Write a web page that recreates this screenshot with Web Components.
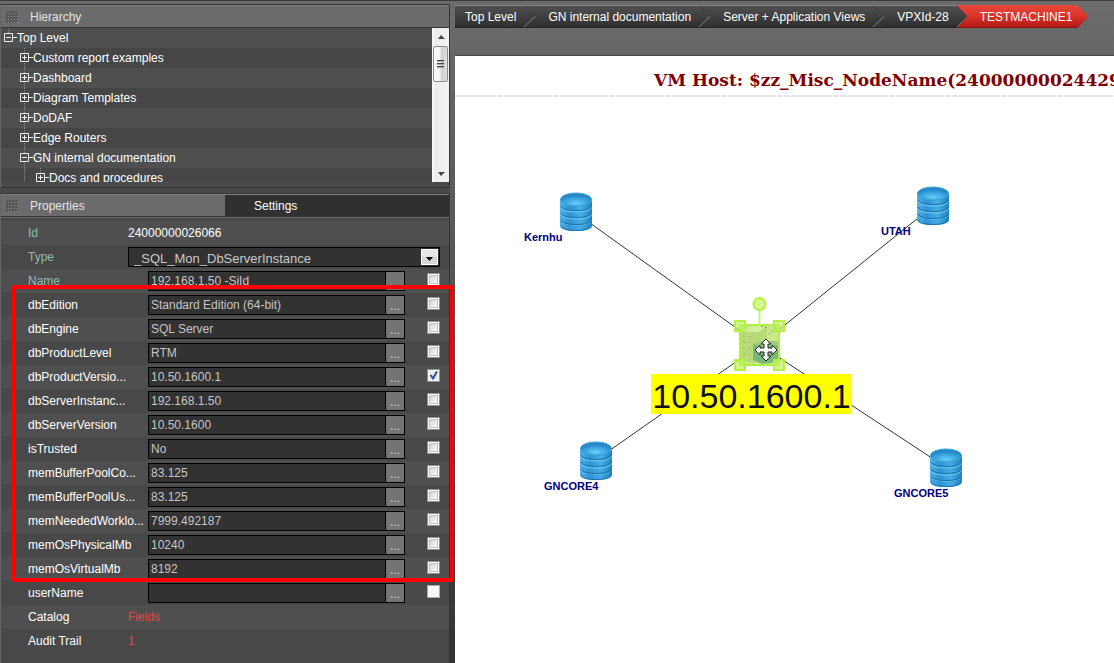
<!DOCTYPE html>
<html lang="en">
<head>
<meta charset="utf-8">
<title>TESTMACHINE1</title>
<style>
body { margin: 0; font-family: "Liberation Sans", Arial, sans-serif; font-size: 12px; color: #fff; background: #4a4a4a; }
</style>
</head>
<body>
<app-shell></app-shell>
<script>
const define = (name, html, setup) => customElements.define(name, class extends HTMLElement {
  connectedCallback() {
    if (this.shadowRoot) return;
    const root = this.attachShadow({ mode: 'open' });
    root.innerHTML = typeof html === 'function' ? html(this) : html;
    if (setup) setup(this, root);
  }
});

define('drag-grip', `<style>:host{display:block;width:12px;height:12px;flex:none}</style>
<svg width="12" height="12"><defs><pattern id="g" width="3" height="3" patternUnits="userSpaceOnUse"><path d="M0 2h1v-1h1v-1" stroke="#444" fill="none"/><path d="M2 2h1v1h-1z" fill="#848484"/></pattern></defs><rect width="12" height="12" fill="url(#g)"/></svg>`);

define('crumb-item', el => `<style>
:host{display:flex;height:23px;flex:none}
a{display:block;color:#fff;text-decoration:none;line-height:22px;white-space:nowrap;padding:0 8px 0 12px;background:linear-gradient(#505050,#2f2f2f);border-top:1px solid #858585;border-bottom:1px solid #222;box-sizing:border-box;height:23px}
:host([first]) a{padding-left:10px}
:host([current]) a{margin-left:-12px;padding:0 16px 0 23px;border:0;background:linear-gradient(#e8483d,#d93228 50%,#b31b13 94%,#8b100a 95%);line-height:24px;clip-path:polygon(0 0,calc(100% - 11px) 0,100% 50%,calc(100% - 11px) 100%,0 100%,11px 50%)}
svg{display:block}
</style><a href="#"><slot></slot></a>${el.hasAttribute('current') ? '' : `<svg width="12" height="23"><defs><linearGradient id="b" x2="0" y2="1"><stop stop-color="#505050"/><stop offset="1" stop-color="#2f2f2f"/></linearGradient></defs><rect width="12" height="23" fill="url(#b)"/><path d="M0 .5h12" stroke="#858585"/><path d="M0 22.500h12" stroke="#222"/><path d="M0 1l11 10.500" stroke="#3c3c3c"/><path d="M0 22l11-10.500" stroke="#868686"/></svg>`}`);

define('crumb-bar', `<style>:host{display:block}nav{display:flex;overflow:hidden}</style>
<nav aria-label="Breadcrumb"><crumb-item first>Top Level</crumb-item><crumb-item>GN internal documentation</crumb-item><crumb-item>Server + Application Views</crumb-item><crumb-item>VPXId-28</crumb-item><crumb-item current>TESTMACHINE1</crumb-item></nav>`);

define('tree-item', el => {
  const level = +el.getAttribute('level'), open = el.hasAttribute('open');
  return `<style>
:host{display:flex;height:20px;flex:none;padding-left:${3 + level * 16}px;line-height:20px;white-space:nowrap}
button{border:0;background:none;padding:0;width:13px;height:20px;flex:none}
svg{display:block}.stem{width:16px;margin-left:-16px;flex:none}
</style>${level === 2 ? '<svg class="stem" width="16" height="20"><path d="M4.500 0v20" stroke="#8c8c8c" stroke-dasharray="1 1"/></svg>' : ''}<button aria-label="${open ? 'Collapse' : 'Expand'}"><svg width="13" height="20"><path d="M4.500 0v5${level === 1 ? 'M4.500 15v5' : ''}" stroke="#8c8c8c" stroke-dasharray="1 1"/><path d="M.5 5.500h8v8h-8zM2 9.500h5${open ? '' : 'M4.500 7v5'}M9 9.500h4" fill="none" stroke="#eee"/></svg></button><slot></slot>`;
});

define('tree-scrollbar', `<style>
:host{display:flex;flex-direction:column;width:17px;flex:none;background:linear-gradient(90deg,#fafafa,#ececec 20%,#f2f2f2)}
.thumb{height:36px;box-sizing:border-box;border:1px solid #8d8d8d;border-radius:2px;margin:0 1px;background:linear-gradient(90deg,#f8f8f8 40%,#cfcfd3 60%,#dedee2)}
svg{display:block}.down{margin-top:auto}
</style>
<svg width="17" height="18"><path d="M6 11l3-4 4 4z" fill="#444"/></svg><div class="thumb"><svg width="13" height="34"><path d="M3 13.500h7M3 16.500h7M3 19.500h7" stroke="#444"/><path d="M3 14.500h7M3 17.500h7M3 20.500h7" stroke="#aaa"/></svg></div><svg class="down" width="17" height="18"><path d="M6 8h7l-4 4z" fill="#444"/></svg>`);

define('hierarchy-panel', `<style>
:host{display:block;border:1px solid #343434;border-left-color:#666;background:#4a4a4a;padding-bottom:5px}
header{display:flex;align-items:center;gap:12px;padding-left:5px;background:#6b6b6b;border-top:1px solid #7f7f7f;border-bottom:1px solid #343434;color:#e4e4e4;box-sizing:border-box;height:23px}
h2{margin:0;font-size:12px;font-weight:400}
.body{display:flex;height:154px}
.tree{flex:1;min-width:0;overflow:hidden;background:repeating-linear-gradient(#4f4f4f 0 20px,#464646 20px 40px)}
</style>
<header><drag-grip></drag-grip><h2>Hierarchy</h2></header>
<div class="body"><div class="tree"><tree-item level="0" open>Top Level</tree-item><tree-item level="1">Custom report examples</tree-item><tree-item level="1">Dashboard</tree-item><tree-item level="1">Diagram Templates</tree-item><tree-item level="1">DoDAF</tree-item><tree-item level="1">Edge Routers</tree-item><tree-item level="1" open>GN internal documentation</tree-item><tree-item level="2">Docs and procedures</tree-item></div><tree-scrollbar></tree-scrollbar></div>`);

const ROW = `:host{display:grid;grid-template-columns:100px 1fr;height:24px;padding:0 9px 0 27px;line-height:24px;white-space:nowrap;box-sizing:border-box}
label,.label{color:#fff}:host([base]) label,:host([base]) .label{color:#8dbdb5}`;

define('text-row', el => `<style>${ROW} a{color:#e0483e;text-decoration:none}</style>
<span class="label">${el.getAttribute('label')}</span><span>${el.hasAttribute('link') ? '<a href="#"><slot></slot></a>' : '<slot></slot>'}</span>`);

define('select-row', el => `<style>${ROW}
.box{position:relative;height:20px;margin-top:2px}
select{appearance:none;display:block;width:100%;height:20px;box-sizing:border-box;border:1px solid #000;border-radius:0;background:#323232;color:#c8c8c8;font:13px/18px "Liberation Sans",Arial,sans-serif;padding:2px 20px 0 5px;margin:0}
svg{position:absolute;right:2px;top:2px;pointer-events:none}
</style><label for="s">${el.getAttribute('label')}</label><div class="box"><select id="s"><option>${el.getAttribute('value')}</option></select><svg width="17" height="16"><rect x=".5" y=".5" width="16" height="15" fill="#e8e8e8" stroke="#fff"/><path d="M1 8h15v7H1z" fill="#d6d6d6"/><path d="M5 8h7l-3.500 4z" fill="#000"/></svg></div>`);

define('field-row', el => `<style>${ROW}
:host{grid-template-columns:120px 1fr 35px}
.field{display:flex;height:20px;margin-top:2px;border:1px solid #000;box-sizing:border-box;background:#323232}
input[type=text]{flex:1;min-width:0;border:0;padding:0 2px;margin:0;background:none;color:#c6c6c6;font:12px/18px "Liberation Sans",Arial,sans-serif;outline:0}
button{width:19px;border:0;border-left:1px solid #000;background:#747474;color:#d4d4d4;padding:2px 0 0;font:12px/16px "Liberation Sans",Arial,sans-serif}
.tick{display:flex;justify-content:flex-end;padding-top:4px}
input[type=checkbox]{appearance:none;margin:0;width:13px;height:13px;border:1px solid #8e8f8f;background:linear-gradient(135deg,#c4c6ce,#fafafa 80%) padding-box;box-shadow:inset 0 0 0 1px #fff,inset 0 0 0 2px #c0c2c8}
:host([plain]) input[type=checkbox]{background:#f8f8f8;box-shadow:none;border-color:#aaa}
input[type=checkbox]:checked{background:url("data:image/svg+xml,%3Csvg xmlns='http://www.w3.org/2000/svg' width='11' height='11'%3E%3Cpath d='M2.500 5l2.500 3.500L9 1.500' fill='none' stroke='%23314f9b' stroke-width='2'/%3E%3C/svg%3E") center no-repeat,#e8e9ee;box-shadow:inset 0 0 0 1px #fff}
</style><label for="f">${el.getAttribute('label')}</label><div class="field"><input type="text" id="f" value="${el.getAttribute('value')}"><button aria-label="Edit ${el.getAttribute('label')}">${el.hasAttribute('nodots') ? '' : '...'}</button></div><div class="tick"><input type="checkbox" aria-label="Show ${el.getAttribute('label')}" ${el.hasAttribute('checked') ? 'checked' : ''}></div>`);

define('red-outline', `<style>:host{display:block;position:absolute;inset:-8px -5px -1px 11px;border:4px solid #f00;border-radius:2px;pointer-events:none}</style>`);

define('properties-panel', () => {
  const rows = [['dbEdition', 'Standard Edition (64-bit)'], ['dbEngine', 'SQL Server'], ['dbProductLevel', 'RTM'], ['dbProductVersio...', '10.50.1600.1'], ['dbServerInstanc...', '192.168.1.50'], ['dbServerVersion', '10.50.1600'], ['isTrusted', 'No'], ['memBufferPoolCo...', '83.125'], ['memBufferPoolUs...', '83.125'], ['memNeededWorklo...', '7999.492187'], ['memOsPhysicalMb', '10240'], ['memOsVirtualMb', '8192']];
  return `<style>
:host{display:block;border:1px solid #343434;border-left-color:#666;border-bottom:0;background:#484848}
.tabs{display:grid;grid-template-columns:224px 1fr;height:23px;border-top:1px solid #7f7f7f;border-bottom:1px solid #343434;box-sizing:border-box}
button{display:flex;align-items:center;gap:12px;border:0;margin:0;padding:0 0 0 5px;background:#6b6b6b;color:#e4e4e4;font:12px "Liberation Sans",Arial,sans-serif;text-align:left}
button+button{background:#303030;color:#fff;padding-left:29px}
.rows{padding-top:3px;border-top:1px solid #666;background:repeating-linear-gradient(#4f4f4f 0 24px,#484848 24px 48px) 0 3px/100% 432px no-repeat}
.marked{position:relative}
</style>
<div class="tabs" role="tablist"><button role="tab" aria-selected="true"><drag-grip></drag-grip>Properties</button><button role="tab">Settings</button></div>
<div class="rows"><text-row base label="Id">24000000026066</text-row><select-row base label="Type" value="_SQL_Mon_DbServerInstance"></select-row><field-row base nodots label="Name" value="192.168.1.50 -SiId"></field-row>
<div class="marked">${rows.map(([l, v]) => `<field-row label="${l}" value="${v}"${l.startsWith('dbProductV') ? ' checked' : ''}></field-row>`).join('')}<red-outline></red-outline></div>
<field-row plain label="userName" value=""></field-row><text-row link label="Catalog">Fields</text-row><text-row link label="Audit Trail">1</text-row></div>`;
});

const place = el => `left:${el.getAttribute('x')}px;top:${el.getAttribute('y')}px`;

define('db-node', el => {
  const disc = y => `<path d="M0 ${y}v7q1 5 16 5t16-5v-7z" fill="url(#d)"/><path d="M1 ${y + 7}q2 4.500 15 4.500t15-4.500" fill="none" stroke="#1a74ae"/><path d="M0 ${y + 1}q2 5 16 5t16-5" fill="none" stroke="#72cdf3"/>`;
  return `<style>:host{position:absolute;${place(el)};display:block;width:70px}
svg{display:block;margin-left:36px}span{position:relative;display:block;width:50px;margin-top:-3px;font:bold 11px/16px "Liberation Sans",Arial,sans-serif;color:#000080;white-space:nowrap}</style>
<svg width="32" height="40"><defs><linearGradient id="d"><stop stop-color="#4fb2e6"/><stop offset=".3" stop-color="#2e92d3"/><stop offset=".65" stop-color="#46ade4"/><stop offset="1" stop-color="#1f80bf"/></linearGradient><radialGradient id="t" cx=".5" cy=".8" r=".6"><stop stop-color="#62d0fa"/><stop offset="1" stop-color="#2389cb"/></radialGradient></defs>${disc(27)}${disc(21)}${disc(14)}${disc(7)}<ellipse cx="16" cy="7.500" rx="15.500" ry="6.500" fill="url(#t)" stroke="#3b9fd6"/></svg><span><slot></slot></span>`;
});

define('selected-node', el => `<style>:host{position:absolute;${place(el)};display:block}svg{display:block}</style>
<svg width="54" height="76"><rect x="6" y="29" width="41" height="41" fill="#cbe88b"/><path d="M8 36l12-6h14v33l-13 4-13-2z" fill="#b9da78"/><path d="M8 36l12-6h14l-8 6z" fill="#d4eda0"/><path d="M10 40l12 1M10 46l12 1M10 52l12 1M10 58l12 1" stroke="#99bd61" stroke-dasharray="2 4"/><path d="M20 48l8-3h17v21l-16 2-9-4z" fill="#78b77a"/><path d="M20 48l10 3 15-2v-4H28z" fill="#9acb83"/><path d="M36 38l7-6M28 30l8 2M12 30l10-1" stroke="#6d9448" stroke-dasharray="2 2"/><rect x="7" y="29" width="39" height="40" fill="none" stroke="#adf03d" stroke-width="2"/><path d="M26.500 14v15" stroke="#c1f56f" stroke-width="2"/><circle cx="26.500" cy="8" r="6" fill="#d5f78e" stroke="#b3f23e" stroke-width="2"/>
<g fill="#c0ef62" fill-opacity=".7" stroke="#b3f23e" stroke-width="2"><path d="M2 25h10v10H2zM41 25h10v10H41zM2 64h10v10H2zM41 64h10v10H41z"/></g>
<path d="M33 43l5 5h-3v4h4v-3l5 5-5 5v-3h-4v4h3l-5 5-5-5h3v-4h-4v3l-5-5 5-5v3h4v-4h-3z" fill="#fff" stroke="#222"/></svg>`);

define('value-badge', el => `<style>:host{position:absolute;${place(el)};display:block;width:201px;background:#ff0;color:#111;font-size:34px;line-height:45px;height:40px;text-align:center;white-space:nowrap}</style><slot></slot>`);

define('diagram-canvas', `<style>
:host{display:block;position:relative;background:#fff;overflow:hidden}
h1{margin:0;padding:0 0 0 199px;height:39px;line-height:48px;box-sizing:border-box;font-family:Georgia,"DejaVu Serif",serif;font-size:17px;font-weight:700;color:#800000;white-space:nowrap}
.rule{height:2px;background:repeating-linear-gradient(90deg,#e4e4e4 0 6px,#fff 6px 7px)}
.edges{position:absolute;left:0;top:0}
</style>
<h1>VM Host: $zz_Misc_NodeName(24000000024429</h1><div class="rule"></div>
<svg class="edges" width="659" height="607"><path d="M121 157L305 289L478 150M141 404L305 289L492 412" fill="none" stroke="#333"/></svg>
<db-node x="69" y="136">Kernhu</db-node><db-node x="426" y="130">UTAH</db-node><db-node x="89" y="385">GNCORE4</db-node><db-node x="439" y="392">GNCORE5</db-node>
<value-badge x="196" y="318">10.50.1600.1</value-badge><selected-node x="278" y="240"></selected-node>`);

define('app-shell', `<style>
:host{display:grid;grid-template-columns:450px minmax(0,1fr);column-gap:5px;min-height:100vh;box-sizing:border-box;border-top:1px solid #3a3a3a;padding-top:3px;background:linear-gradient(#6c6c6c,#333)}
aside{display:flex;flex-direction:column;background:#4a4a4a;position:relative;z-index:1}
properties-panel{flex:1;margin-top:5px}
main{display:flex;flex-direction:column}
.top{height:52px;box-sizing:border-box;padding-top:1px;background:linear-gradient(#6c6c6c,#666);border-bottom:1px solid #484848}
diagram-canvas{flex:1}
</style>
<aside><hierarchy-panel></hierarchy-panel><properties-panel></properties-panel></aside>
<main><div class="top"><crumb-bar></crumb-bar></div><diagram-canvas></diagram-canvas></main>`);
</script>
</body>
</html>
